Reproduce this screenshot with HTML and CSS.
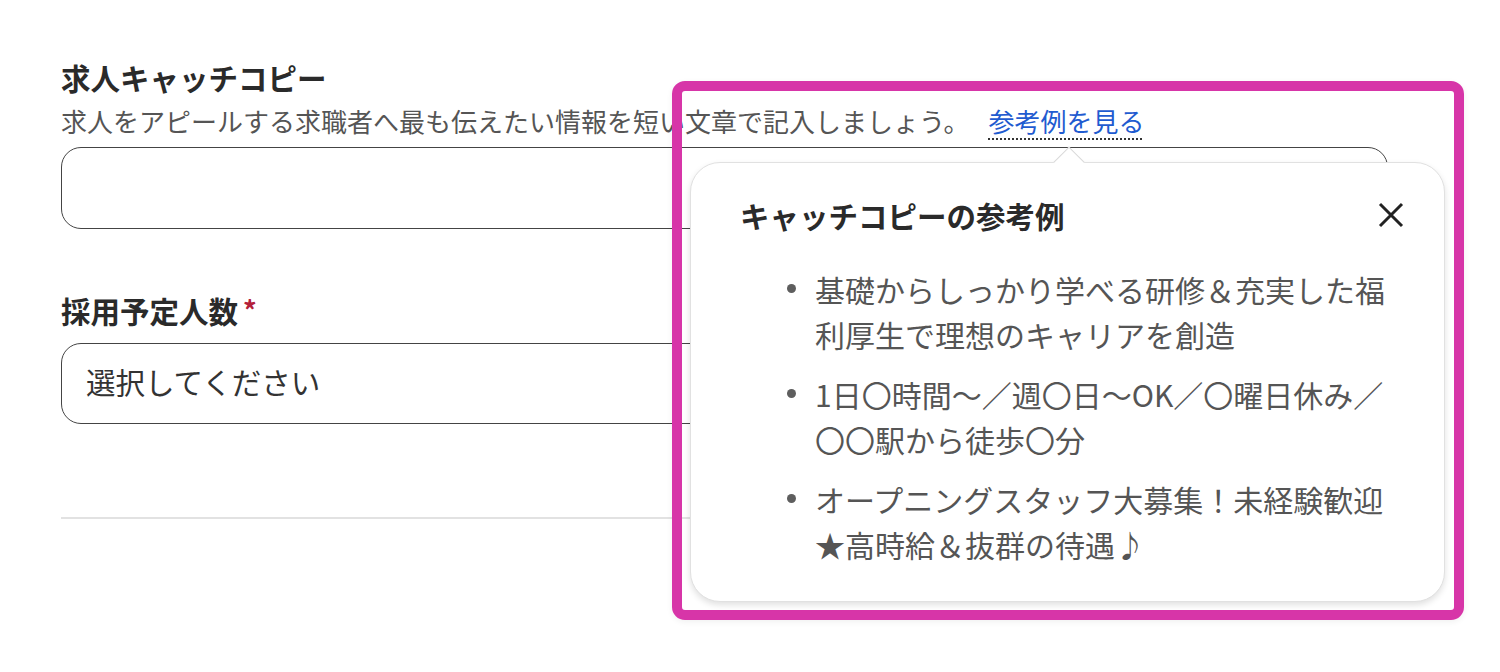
FILE: index.html
```html
<!DOCTYPE html>
<html lang="ja">
<head>
<meta charset="utf-8">
<title>求人キャッチコピー</title>
<link rel="stylesheet" href="styles.css">
</head>
<body>
<main class="form">
  <section class="field">
    <h2 class="field-label">求人キャッチコピー</h2>
    <p class="field-help">求人をアピールする求職者へ最も伝えたい情報を短い文章で記入しましょう。<a class="help-link" href="#">参考例を見る</a></p>
    <div class="text-input"></div>
  </section>
  <section class="field field-count">
    <h2 class="field-label">採用予定人数<span class="required">*</span></h2>
    <div class="select">選択してください</div>
  </section>
  <hr class="divider">
</main>

<div class="popover">
  <div class="popover-arrow"></div>
  <div class="popover-header">
    <h3 class="popover-title">キャッチコピーの参考例</h3>
    <button class="popover-close" type="button" aria-label="閉じる">
      <svg width="26" height="26" viewBox="0 0 26 26"><path d="M2 2 L24 24 M24 2 L2 24" stroke="#222" stroke-width="3" stroke-linecap="butt" fill="none"/></svg>
    </button>
  </div>
  <ul class="examples">
    <li>基礎からしっかり学べる研修＆充実した福利厚生で理想のキャリアを創造</li>
    <li>1日〇時間～／週〇日～OK／〇曜日休み／〇〇駅から徒歩〇分</li>
    <li>オープニングスタッフ大募集！未経験歓迎★高時給＆抜群の待遇♪</li>
  </ul>
</div>

<div class="highlight"></div>
</body>
</html>
```

FILE: styles.css
```css
html, body {
  margin: 0;
  padding: 0;
  background: #fff;
}

body {
  font-family: "Noto Sans CJK JP", "Noto Sans", sans-serif;
  color: #333;
  width: 1500px;
  height: 672px;
  overflow: hidden;
  position: relative;
}

.form {
  padding: 57px 0 0 61px;
  width: 1327px;
}

.field-label {
  margin: 0;
  font-size: 29.5px;
  line-height: 40px;
  font-weight: 700;
  color: #2a2a2a;
}

.required {
  color: #b3213a;
  font-size: 27px;
  font-weight: 700;
  margin-left: 5px;
  vertical-align: 2px;
}

.field-help {
  margin: 6px 0 0;
  font-size: 26px;
  line-height: 36px;
  color: #555;
  white-space: nowrap;
}

.help-link {
  margin-left: 19px;
  color: #1f5bd0;
  text-decoration-line: underline;
  text-decoration-style: dotted;
  text-decoration-color: #333;
  text-decoration-thickness: 2px;
  text-underline-offset: 6px;
}

.text-input {
  margin-top: 8px;
  height: 82px;
  box-sizing: border-box;
  border: 1.8px solid #444;
  border-radius: 20px;
  background: #fff;
}

.field-count {
  margin-top: 61px;
}

.select {
  margin-top: 13px;
  height: 81px;
  box-sizing: border-box;
  border: 1.8px solid #444;
  border-radius: 20px;
  padding: 0 0 5px 24px;
  display: flex;
  align-items: center;
  font-size: 29.5px;
  color: #333;
  background: #fff;
}

.divider {
  margin: 93px 0 0;
  border: none;
  border-top: 2px solid #e2e2e2;
  height: 0;
}

/* popover */
.popover {
  position: absolute;
  left: 690px;
  top: 162px;
  width: 755px;
  box-sizing: border-box;
  padding: 32px 40px 34px 49px;
  background: #fff;
  border: 1px solid #e1e1e1;
  border-radius: 30px;
  box-shadow: 0 3px 6px rgba(0, 0, 0, 0.12);
}

.popover-arrow {
  position: absolute;
  left: 367px;
  top: -12px;
  width: 21px;
  height: 21px;
  background: #fff;
  border-top: 1px solid #d9d9d9;
  border-left: 1px solid #d9d9d9;
  transform: rotate(45deg);
}

.popover-header {
  display: flex;
  justify-content: space-between;
  align-items: center;
  height: 40px;
}

.popover-title {
  margin: 0;
  font-size: 29.5px;
  line-height: 40px;
  font-weight: 700;
  color: #2a2a2a;
}

.popover-close {
  display: block;
  width: 26px;
  height: 26px;
  padding: 0;
  border: none;
  background: none;
}

.popover-close svg {
  display: block;
}

.examples {
  list-style: none;
  margin: 32px 0 0;
  padding: 0 0 0 75px;
}

.examples li {
  position: relative;
  font-size: 30px;
  line-height: 45px;
  color: #555;
}

.examples li + li {
  margin-top: 15px;
}

.examples li::before {
  content: "";
  position: absolute;
  left: -28px;
  top: 17px;
  width: 9px;
  height: 9px;
  border-radius: 50%;
  background: #5e5e5e;
}

/* annotation frame */
.highlight {
  position: absolute;
  left: 672px;
  top: 81px;
  width: 792px;
  height: 539px;
  box-sizing: border-box;
  border: 10px solid #d735a8;
  border-radius: 13px;
  pointer-events: none;
  box-shadow: 0 2px 6px rgba(0, 0, 0, 0.06);
}
```
